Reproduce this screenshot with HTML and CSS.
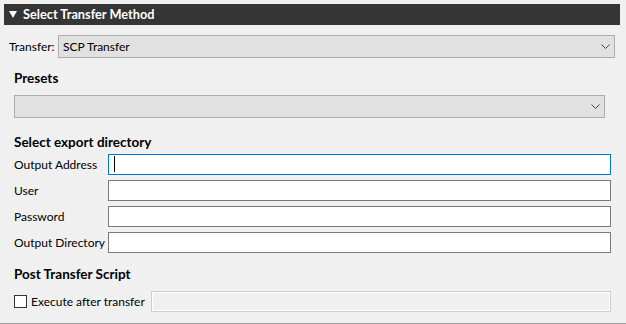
FILE: index.html
```html
<!DOCTYPE html>
<html>
<head>
<meta charset="utf-8">
<link rel="stylesheet" href="styles.css">
</head>
<body>
<div class="app">
  <div class="header">
    <svg class="tri" width="8" height="7" viewBox="0 0 8 7"><polygon points="0,0 8,0 4,7" fill="#ffffff"/></svg>
    <span class="header-title">Select Transfer Method</span>
  </div>
  <div class="transfer-row">
    <span class="transfer-label">Transfer:</span>
    <div class="combo combo-transfer">
      <span class="combo-text">SCP Transfer</span>
      <svg class="chev" width="9" height="5" viewBox="0 0 9 5"><polyline points="0.5,0.5 4.5,4.5 8.5,0.5" fill="none" stroke="#444" stroke-width="1"/></svg>
    </div>
  </div>
  <div class="section">
    <div class="heading h-presets">Presets</div>
    <div class="combo combo-presets">
      <span class="combo-text"></span>
      <svg class="chev" width="9" height="5" viewBox="0 0 9 5"><polyline points="0.5,0.5 4.5,4.5 8.5,0.5" fill="none" stroke="#444" stroke-width="1"/></svg>
    </div>
    <div class="heading h-export">Select export directory</div>
    <div class="fields">
      <div class="field-row"><span class="field-label">Output Address</span><div class="input focused"><span class="caret"></span></div></div>
      <div class="field-row"><span class="field-label">User</span><div class="input"></div></div>
      <div class="field-row"><span class="field-label">Password</span><div class="input"></div></div>
      <div class="field-row"><span class="field-label">Output Directory</span><div class="input"></div></div>
    </div>
    <div class="heading h-post">Post Transfer Script</div>
    <div class="check-row">
      <span class="checkbox"></span>
      <span class="check-label">Execute after transfer</span>
      <div class="input disabled"></div>
    </div>
  </div>
</div>
</body>
</html>
```
FILE: styles.css
```css
html, body {
  margin: 0;
  padding: 0;
  background: #f0f0f0;
}
.app {
  width: 626px;
  height: 324px;
  box-sizing: border-box;
  border-bottom: 1px solid #a0a0a0;
  font-family: Lato, "Noto Sans", sans-serif;
  font-size: 12px;
  color: #000;
  overflow: hidden;
  white-space: nowrap;
}
.header {
  margin: 4px 6px 0 4px;
  height: 21px;
  background: #353535;
  display: flex;
  align-items: center;
  padding-left: 5px;
  color: #fff;
  font-weight: bold;
  font-size: 12.75px;
}
.tri {
  display: block;
  margin-right: 6px;
}
.header-title {
  line-height: 21px;
}
.transfer-row {
  margin-top: 10px;
  display: flex;
  align-items: center;
  padding-left: 9px;
  padding-right: 11px;
  height: 23px;
}
.transfer-label {
  width: 49px;
  flex: none;
}
.combo {
  height: 23px;
  box-sizing: border-box;
  border: 1px solid #adadad;
  background: #e1e1e1;
  display: flex;
  align-items: center;
  padding-left: 4px;
  padding-right: 4px;
}
.combo-transfer {
  flex: 1;
}
.combo-text {
  flex: 1;
}
.chev {
  display: block;
}
.section {
  padding-left: 14px;
}
.heading {
  font-weight: bold;
  font-size: 13.5px;
  line-height: 18px;
  height: 18px;
}
.h-presets {
  margin-top: 11px;
}
.combo-presets {
  margin-top: 8px;
  margin-right: 21px;
}
.h-export {
  margin-top: 15px;
}
.fields {
  margin-top: 3px;
  display: flex;
  flex-direction: column;
  gap: 5px;
  padding-right: 15px;
}
.field-row {
  display: flex;
  align-items: center;
  height: 21px;
}
.field-label {
  width: 94px;
  flex: none;
}
.input {
  flex: 1;
  height: 21px;
  box-sizing: border-box;
  border: 1px solid #7a7a7a;
  background: #fff;
  position: relative;
}
.input.focused {
  border-color: #0078d7;
}
.caret {
  position: absolute;
  left: 5px;
  top: 1px;
  width: 1px;
  height: 16px;
  background: #000;
}
.h-post {
  margin-top: 12px;
}
.check-row {
  margin-top: 8px;
  display: flex;
  align-items: center;
  height: 21px;
  padding-right: 15px;
}
.checkbox {
  width: 13px;
  height: 13px;
  box-sizing: border-box;
  border: 1px solid #333;
  background: #fff;
  flex: none;
  margin-right: 4px;
}
.check-label {
  width: 120px;
  flex: none;
}
.input.disabled {
  border-color: #cccccc;
  background: #f0f0f0;
  box-shadow: inset 0 0 0 1px #ffffff;
}
```
